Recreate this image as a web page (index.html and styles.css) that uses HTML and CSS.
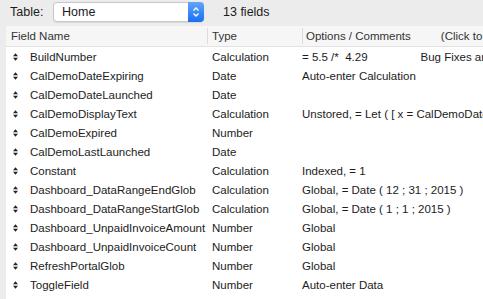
FILE: index.html
```html
<!DOCTYPE html>
<html lang="en">
<head>
	<meta charset="UTF-8">
	<title>Fields</title>
	<link rel="stylesheet" href="styles.css">
</head>
<body>
<div class="toolbar">
	<span class="toolbar-label">Table:</span>
	<div class="popup">
		<span class="popup-value">Home</span>
		<span class="popup-stepper">
			<svg width="8" height="12" viewBox="0 0 8 12"><path d="M1.5 4.5 L4 2 L6.5 4.5 M1.5 7.5 L4 10 L6.5 7.5" fill="none" stroke="#fff" stroke-width="1.3"/></svg>
		</span>
	</div>
	<span class="toolbar-count">13 fields</span>
</div>
<div class="list">
	<div class="list-head">
		<div class="col col-name">Field Name</div>
		<div class="col col-type">Type</div>
		<div class="col col-opts">Options / Comments<span class="gap"></span>(Click to toggle)</div>
	</div>
	<div class="list-body"></div>
</div>
<script>
	const fields = [
		['BuildNumber', 'Calculation', '= 5.5 /*&nbsp; 4.29<span class="tab"></span>Bug Fixes and'],
		['CalDemoDateExpiring', 'Date', 'Auto-enter Calculation'],
		['CalDemoDateLaunched', 'Date', ''],
		['CalDemoDisplayText', 'Calculation', 'Unstored, = Let ( [ x = CalDemoDateExpiring'],
		['CalDemoExpired', 'Number', ''],
		['CalDemoLastLaunched', 'Date', ''],
		['Constant', 'Calculation', 'Indexed, = 1'],
		['Dashboard_DataRangeEndGlob', 'Calculation', 'Global, = Date ( 12 ; 31 ; 2015 )'],
		['Dashboard_DataRangeStartGlob', 'Calculation', 'Global, = Date ( 1 ; 1 ; 2015 )'],
		['Dashboard_UnpaidInvoiceAmount', 'Number', 'Global'],
		['Dashboard_UnpaidInvoiceCount', 'Number', 'Global'],
		['RefreshPortalGlob', 'Number', 'Global'],
		['ToggleField', 'Number', 'Auto-enter Data'],
	];

	// 排序图标
	const grip = '<svg class="grip" width="5" height="8" viewBox="0 0 5 8"><path d="M0 3.3 L2.5 0.3 L5 3.3 Z M0 4.7 L2.5 7.7 L5 4.7 Z" fill="#222"/></svg>';

	const body = document.querySelector('.list-body');
	let html = '';
	for (let i = 0; i < fields.length; i++) {
		html += `<div class="row">
			<div class="col col-name">${grip}<span>${fields[i][0]}</span></div>
			<div class="col col-type">${fields[i][1]}</div>
			<div class="col col-opts">${fields[i][2]}</div>
		</div>`;
	}
	body.innerHTML = html;
</script>
</body>
</html>
```

FILE: styles.css
```css
* {
	box-sizing: border-box;
}

html,
body {
	height: 100%;
}

body {
	display: flex;
	flex-direction: column;
	margin: 0;
	overflow: hidden;
	font-family: "Liberation Sans", Arial, sans-serif;
	font-size: 11.5px;
	color: #1c1c1c;
	background-color: #ececec;
}

.toolbar {
	display: flex;
	align-items: center;
	height: 26px;
	padding: 0 0 2px 10px;
	font-size: 12.5px;
}

.toolbar-label {
	width: 43px;
}

.popup {
	display: flex;
	align-items: center;
	width: 151px;
	height: 20px;
	border: 1px solid #c8c8c8;
	border-radius: 4px;
	background-color: #fff;
	box-shadow: 0 0.5px 1px rgba(0, 0, 0, 0.08);
}

.popup-value {
	flex: 1;
	padding-left: 8px;
}

.popup-stepper {
	display: flex;
	align-items: center;
	justify-content: center;
	width: 16px;
	height: 20px;
	margin-right: -1px;
	border-radius: 0 4px 4px 0;
	background: linear-gradient(#5fa6fb, #1a6ef5);
}

.toolbar-count {
	margin-left: 19px;
}

.list {
	flex: 1;
	margin-left: 6px;
	background-color: #fff;
}

.list-head {
	display: flex;
	height: 21px;
	align-items: center;
	border-bottom: 1px solid #e2e2e2;
	background-color: #f6f6f6;
	color: #333;
}

.list-head .col {
	height: 16px;
	line-height: 16px;
}

.list-head .col-type,
.list-head .col-opts {
	border-left: 1px solid #dcdcdc;
}

.col {
	white-space: nowrap;
	overflow: hidden;
}

.col-name {
	width: 201px;
	padding-left: 5px;
}

.col-type {
	width: 95px;
	padding-left: 4px;
}

.col-opts {
	flex: 1;
	padding-left: 3px;
}

.row {
	display: flex;
	align-items: center;
	height: 19px;
}

.row .col-name {
	display: flex;
	align-items: center;
	padding-left: 7px;
}

.row .col-type {
	padding-left: 5px;
}

.row .col-opts {
	padding-left: 0;
}

.grip {
	flex-shrink: 0;
	margin-right: 12px;
}

.tab {
	display: inline-block;
	width: 53px;
}

.gap {
	display: inline-block;
	width: 30px;
}
```
